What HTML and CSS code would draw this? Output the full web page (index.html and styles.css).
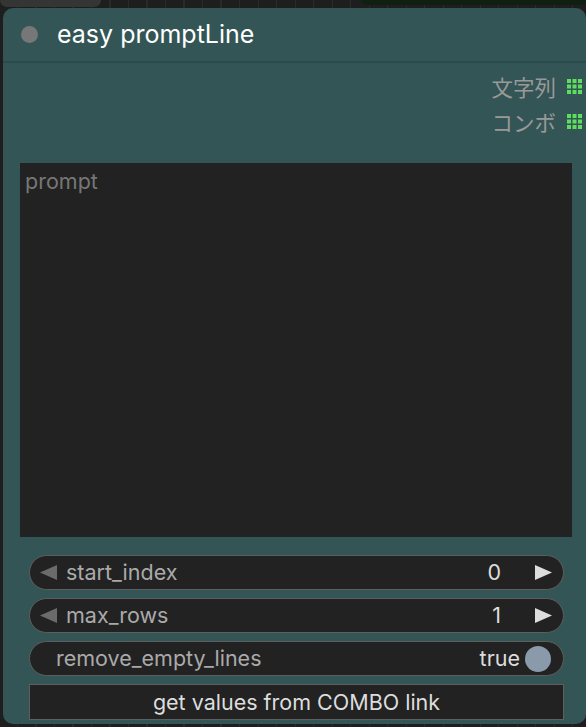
FILE: index.html
```html
<!DOCTYPE html>
<html lang="ja">
<head>
<meta charset="utf-8">
<title>easy promptLine</title>
<link rel="stylesheet" href="styles.css">
</head>
<body>
<div class="canvas">
  <div class="peek peek-gray"></div>
  <div class="peek peek-green"></div>
  <div class="node">
    <div class="node-title">
      <span class="node-dot"></span>
      <span class="node-name">easy promptLine</span>
    </div>
    <div class="outputs">
      <div class="output">
        <span class="output-label">文字列</span>
        <svg class="slot" width="15" height="15" viewBox="0 0 15 15">
          <g fill="#5fdd5f">
            <rect x="0" y="0" width="4" height="4"/><rect x="5.5" y="0" width="4" height="4"/><rect x="11" y="0" width="4" height="4"/>
            <rect x="0" y="5.5" width="4" height="4"/><rect x="5.5" y="5.5" width="4" height="4"/><rect x="11" y="5.5" width="4" height="4"/>
            <rect x="0" y="11" width="4" height="4"/><rect x="5.5" y="11" width="4" height="4"/><rect x="11" y="11" width="4" height="4"/>
          </g>
        </svg>
      </div>
      <div class="output">
        <span class="output-label">コンボ</span>
        <svg class="slot" width="15" height="15" viewBox="0 0 15 15">
          <g fill="#5fdd5f">
            <rect x="0" y="0" width="4" height="4"/><rect x="5.5" y="0" width="4" height="4"/><rect x="11" y="0" width="4" height="4"/>
            <rect x="0" y="5.5" width="4" height="4"/><rect x="5.5" y="5.5" width="4" height="4"/><rect x="11" y="5.5" width="4" height="4"/>
            <rect x="0" y="11" width="4" height="4"/><rect x="5.5" y="11" width="4" height="4"/><rect x="11" y="11" width="4" height="4"/>
          </g>
        </svg>
      </div>
    </div>
    <div class="prompt-box">
      <span class="placeholder">prompt</span>
    </div>
    <div class="widgets">
      <div class="pill">
        <svg class="arrow" width="17" height="15" viewBox="0 0 17 15"><polygon points="17,0 17,15 0,7.5" fill="#6b6b6b"/></svg>
        <span class="pill-label">start_index</span>
        <span class="pill-value">0</span>
        <svg class="arrow arrow-right" width="17" height="15" viewBox="0 0 17 15"><polygon points="0,0 0,15 17,7.5" fill="#dddddd"/></svg>
      </div>
      <div class="pill">
        <svg class="arrow" width="17" height="15" viewBox="0 0 17 15"><polygon points="17,0 17,15 0,7.5" fill="#6b6b6b"/></svg>
        <span class="pill-label">max_rows</span>
        <span class="pill-value">1</span>
        <svg class="arrow arrow-right" width="17" height="15" viewBox="0 0 17 15"><polygon points="0,0 0,15 17,7.5" fill="#dddddd"/></svg>
      </div>
      <div class="pill pill-toggle">
        <span class="pill-label">remove_empty_lines</span>
        <span class="toggle-value">true</span>
        <span class="toggle-dot"></span>
      </div>
      <div class="button">get values from COMBO link</div>
    </div>
  </div>
</div>
</body>
</html>
```
FILE: styles.css
```css
html, body {
  margin: 0;
  padding: 0;
}
body {
  width: 586px;
  height: 727px;
  overflow: hidden;
  background-color: #1e1e1e;
  background-image: repeating-linear-gradient(90deg, #1e1e1e 0 17px, #2a2a2a 17px 18.5px);
  font-family: Inter, "Liberation Sans", "Noto Sans CJK JP", sans-serif;
}
.canvas {
  position: relative;
  width: 586px;
  height: 727px;
}
.peek {
  position: absolute;
  top: 0;
}
.peek-gray {
  left: 0;
  width: 101px;
  height: 7px;
  background: #353535;
  border-radius: 0 0 8px 8px;
}
.peek-green {
  left: 362px;
  width: 224px;
  height: 5px;
  background: #0f1f12;
  border-radius: 0 0 6px 6px;
}
.node {
  position: absolute;
  left: 3px;
  top: 8px;
  width: 583px;
  height: 716px;
  background: #345555;
  border-radius: 10px;
  display: flex;
  flex-direction: column;
  box-sizing: border-box;
}
.node-title {
  height: 53px;
  display: flex;
  align-items: center;
  border-bottom: 2px solid #2c4a4a;
  padding-left: 18px;
  box-sizing: content-box;
}
.node-dot {
  width: 17px;
  height: 17px;
  border-radius: 50%;
  background: #777777;
  flex: none;
}
.node-name {
  margin-left: 19px;
  color: #ffffff;
  font-size: 25px;
  line-height: 1;
}
.outputs {
  display: flex;
  flex-direction: column;
  align-items: flex-end;
  padding-top: 6px;
  padding-right: 4px;
}
.output {
  height: 35px;
  display: flex;
  align-items: center;
  gap: 11px;
}
.output-label {
  color: #999999;
  font-size: 21.5px;
  font-family: "Noto Sans CJK JP", sans-serif;
  line-height: 1;
}
.slot {
  display: block;
  flex: none;
}
.prompt-box {
  margin: 24px 0 0 17px;
  width: 552px;
  height: 374px;
  background: #222222;
  box-sizing: border-box;
  padding: 6px 0 0 5px;
}
.placeholder {
  color: #777777;
  font-size: 21.5px;
  line-height: 24px;
}
.widgets {
  display: flex;
  flex-direction: column;
  gap: 8px;
  margin: 18px 0 0 26px;
  width: 535px;
}
.pill {
  height: 35px;
  box-sizing: border-box;
  border: 1.5px solid #5e5e5e;
  border-radius: 18px;
  background: #222222;
  display: flex;
  align-items: center;
  padding: 0 11px 0 10px;
}
.arrow {
  display: block;
  flex: none;
}
.pill-label {
  color: #aaaaaa;
  font-size: 21.5px;
  margin-left: 9px;
  flex: 1;
  position: relative;
  top: -1px;
}
.pill-value {
  color: #dddddd;
  font-size: 21.5px;
  margin-right: 34px;
  position: relative;
  top: -1px;
}
.pill-toggle {
  padding-left: 26px;
  padding-right: 12px;
}
.pill-toggle .pill-label {
  margin-left: 0;
}
.toggle-value {
  color: #dddddd;
  font-size: 21.5px;
  position: relative;
  top: -1px;
}
.toggle-dot {
  width: 26px;
  height: 26px;
  border-radius: 50%;
  background: #8a9aab;
  margin-left: 5px;
  flex: none;
}
.button {
  height: 36px;
  box-sizing: border-box;
  border: 1.5px solid #5e5e5e;
  background: #222222;
  color: #dddddd;
  font-size: 21.5px;
  display: flex;
  align-items: center;
  justify-content: center;
}
```
